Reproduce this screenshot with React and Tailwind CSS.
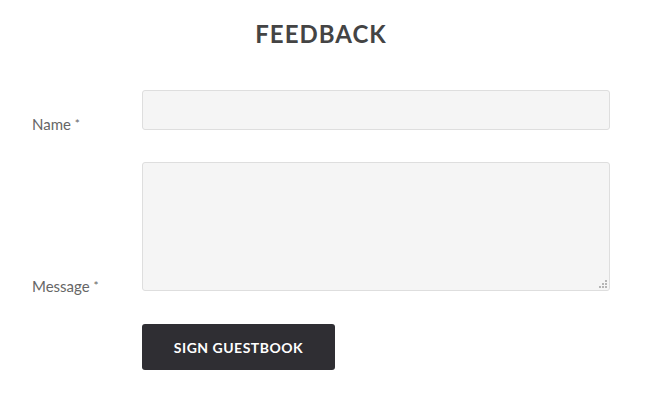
export default function App() {
  return (
    <div className="w-[650px] h-[404px] bg-white font-['Lato','Open_Sans',sans-serif] text-[#666]">
      <h1 className="pt-[20px] pr-[8px] text-center text-[24px] leading-[28px] font-bold text-[#444] tracking-[1px]">
        FEEDBACK
      </h1>

      <form className="pt-[42px] pl-[32px] pr-[40px] flex flex-col gap-[32px]">
        <div className="flex items-end">
          <label className="w-[110px] text-[15px] leading-[18px] mb-[-3px]">
            Name <span className="text-[12px] align-top">*</span>
          </label>
          <input
            type="text"
            className="flex-1 h-[40px] bg-[#f5f5f5] border border-[#dedede] rounded-[3px] outline-none px-3"
          />
        </div>

        <div className="flex items-end">
          <label className="w-[110px] text-[15px] leading-[18px] mb-[-4px]">
            Message <span className="text-[12px] align-top">*</span>
          </label>
          <div className="relative flex-1 flex">
            <textarea className="flex-1 h-[129px] bg-[#f5f5f5] border border-[#dedede] rounded-[3px] outline-none px-3 py-2 resize-none" />
            <svg className="absolute right-[3px] bottom-[3px]" width="8" height="8" viewBox="0 0 8 8" fill="#b5b5b5">
              <rect x="6" y="0" width="2" height="2" />
              <rect x="3" y="3" width="2" height="2" />
              <rect x="6" y="3" width="2" height="2" />
              <rect x="0" y="6" width="2" height="2" />
              <rect x="3" y="6" width="2" height="2" />
              <rect x="6" y="6" width="2" height="2" />
            </svg>
          </div>
        </div>

        <div className="flex pt-[1px]">
          <div className="w-[110px]" />
          <button
            type="button"
            className="w-[193px] h-[46px] bg-[#2f2e33] text-white text-[14px] font-bold rounded-[3px] tracking-[0.5px]"
          >
            SIGN GUESTBOOK
          </button>
        </div>
      </form>
    </div>
  );
}
